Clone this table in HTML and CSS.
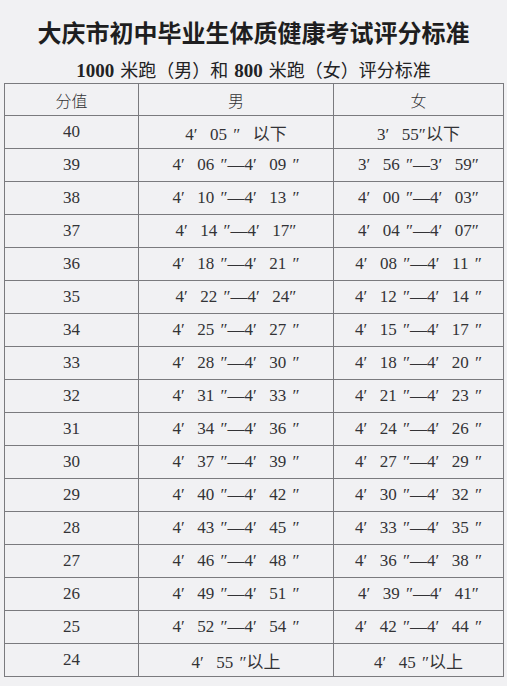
FILE: index.html
```html
<!DOCTYPE html>
<html lang="zh-CN">
<head>
<meta charset="utf-8">
<title>大庆市初中毕业生体质健康考试评分标准</title>
<link rel="stylesheet" href="styles.css">
</head>
<body>
<h1 class="title">大庆市初中毕业生体质健康考试评分标准</h1>
<h2 class="subtitle"><span class="num">1000</span> 米跑（男）和 <span class="num">800</span> 米跑（女）评分标准</h2>
<table class="score-table">
  <colgroup>
    <col class="c1"><col class="c2"><col class="c3">
  </colgroup>
  <thead>
    <tr><th>分值</th><th>男</th><th>女</th></tr>
  </thead>
  <tbody>
    <tr><td>40</td><td>4′  05 ″  以下</td><td>3′  55″以下</td></tr>
    <tr><td>39</td><td>4′  06 ″—4′  09 ″</td><td>3′  56 ″—3′  59″</td></tr>
    <tr><td>38</td><td>4′  10 ″—4′  13 ″</td><td>4′  00 ″—4′  03″</td></tr>
    <tr><td>37</td><td>4′  14 ″—4′  17″</td><td>4′  04 ″—4′  07″</td></tr>
    <tr><td>36</td><td>4′  18 ″—4′  21 ″</td><td>4′  08 ″—4′  11 ″</td></tr>
    <tr><td>35</td><td>4′  22 ″—4′  24″</td><td>4′  12 ″—4′  14 ″</td></tr>
    <tr><td>34</td><td>4′  25 ″—4′  27 ″</td><td>4′  15 ″—4′  17 ″</td></tr>
    <tr><td>33</td><td>4′  28 ″—4′  30 ″</td><td>4′  18 ″—4′  20 ″</td></tr>
    <tr><td>32</td><td>4′  31 ″—4′  33 ″</td><td>4′  21 ″—4′  23 ″</td></tr>
    <tr><td>31</td><td>4′  34 ″—4′  36 ″</td><td>4′  24 ″—4′  26 ″</td></tr>
    <tr><td>30</td><td>4′  37 ″—4′  39 ″</td><td>4′  27 ″—4′  29 ″</td></tr>
    <tr><td>29</td><td>4′  40 ″—4′  42 ″</td><td>4′  30 ″—4′  32 ″</td></tr>
    <tr><td>28</td><td>4′  43 ″—4′  45 ″</td><td>4′  33 ″—4′  35 ″</td></tr>
    <tr><td>27</td><td>4′  46 ″—4′  48 ″</td><td>4′  36 ″—4′  38 ″</td></tr>
    <tr><td>26</td><td>4′  49 ″—4′  51 ″</td><td>4′  39 ″—4′  41″</td></tr>
    <tr><td>25</td><td>4′  52 ″—4′  54 ″</td><td>4′  42 ″—4′  44 ″</td></tr>
    <tr><td>24</td><td>4′  55 ″以上</td><td>4′  45 ″以上</td></tr>
  </tbody>
</table>
</body>
</html>
```

FILE: styles.css
```css
html, body {
  margin: 0;
  padding: 0;
  background: #f1f1f3;
}
body {
  font-family: "Liberation Serif", "Noto Sans CJK SC", serif;
  color: #2c2c2e;
}
.title {
  margin: 0;
  padding-top: 17px;
  font-family: "Noto Sans CJK SC", sans-serif;
  font-size: 24px;
  line-height: 30px;
  font-weight: 700;
  text-align: center;
  color: #1e1e20;
}
.subtitle {
  margin: 10px 0 0;
  font-family: "Noto Sans CJK SC", sans-serif;
  font-size: 18px;
  line-height: 24px;
  font-weight: 400;
  text-align: center;
  color: #222224;
  word-spacing: 2px;
}
.subtitle .num {
  font-family: "Liberation Serif", serif;
  font-weight: 700;
  font-size: 19px;
}
.score-table {
  margin-left: 4px;
  width: 499px;
  border-collapse: collapse;
  table-layout: fixed;
  border: 1px solid #6e6e72;
}
.c1 { width: 134px; }
.c2 { width: 195px; }
.c3 { width: 170px; }
.score-table th,
.score-table td {
  border: 1px solid #7a7a7e;
  padding: 0;
  text-align: center;
  vertical-align: middle;
  font-size: 17px;
  font-weight: 400;
  color: #333336;
  white-space: pre;
  word-spacing: 2px;
}
.score-table thead tr { height: 32px; }
.score-table tbody tr { height: 33px; }
.score-table th {
  font-family: "Noto Sans CJK SC", sans-serif;
  font-size: 16px;
  font-weight: 300;
}
```
